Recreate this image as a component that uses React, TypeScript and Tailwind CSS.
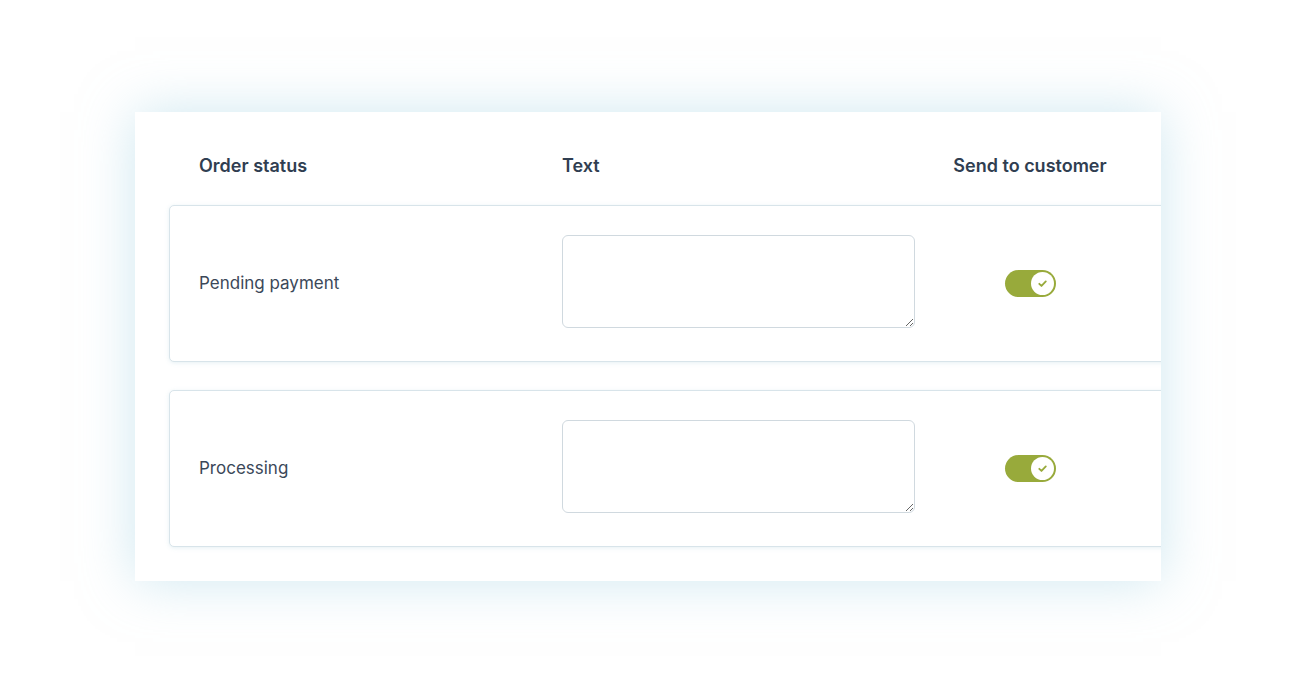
import React from "react";

function Toggle() {
  return (
    <div className="flex h-[27px] w-[51px] items-center justify-end rounded-full bg-[#98aa3b] pr-[2px]">
      <div className="flex h-[23px] w-[23px] items-center justify-center rounded-full bg-white">
        <svg width="11" height="11" viewBox="0 0 12 12" fill="none">
          <path d="M2.5 6.3l2.4 2.4L9.6 3.8" stroke="#98aa3b" strokeWidth="2" strokeLinecap="round" strokeLinejoin="round" />
        </svg>
      </div>
    </div>
  );
}

function Row({ label }: { label: string }) {
  return (
    <div className="grid h-[157px] w-[1020px] grid-cols-[363px_353px_230px] items-center rounded-[5px] border border-[#d8e4ea] bg-white pl-[29px] shadow-[0_1px_4px_rgba(170,205,220,0.3)]">
      <div className="text-[17px] text-[#3b4859]">{label}</div>
      <textarea className="mb-[4px] block h-[93px] w-[353px] rounded-[6px] border border-[#d0d9df] bg-white outline-none" />
      <div className="flex justify-center">
        <Toggle />
      </div>
    </div>
  );
}

export default function App() {
  return (
    <div className="min-h-[691px] w-[1300px] bg-white pl-[135px] pt-[112px]" style={{ fontFamily: "Inter, 'Noto Sans', sans-serif" }}>
      <div className="h-[469px] w-[1026px] overflow-hidden bg-white pl-[34px] shadow-[0_0_50px_rgba(160,210,228,0.5)]">
        <div className="grid h-[93px] grid-cols-[363px_353px_230px] pl-[30px] pt-[42px] text-[18px] font-semibold leading-[24px] text-[#303e51]">
          <div>Order status</div>
          <div>Text</div>
          <div className="text-center">Send to customer</div>
        </div>
        <div className="flex flex-col gap-[28px]">
          <Row label="Pending payment" />
          <Row label="Processing" />
        </div>
      </div>
    </div>
  );
}
